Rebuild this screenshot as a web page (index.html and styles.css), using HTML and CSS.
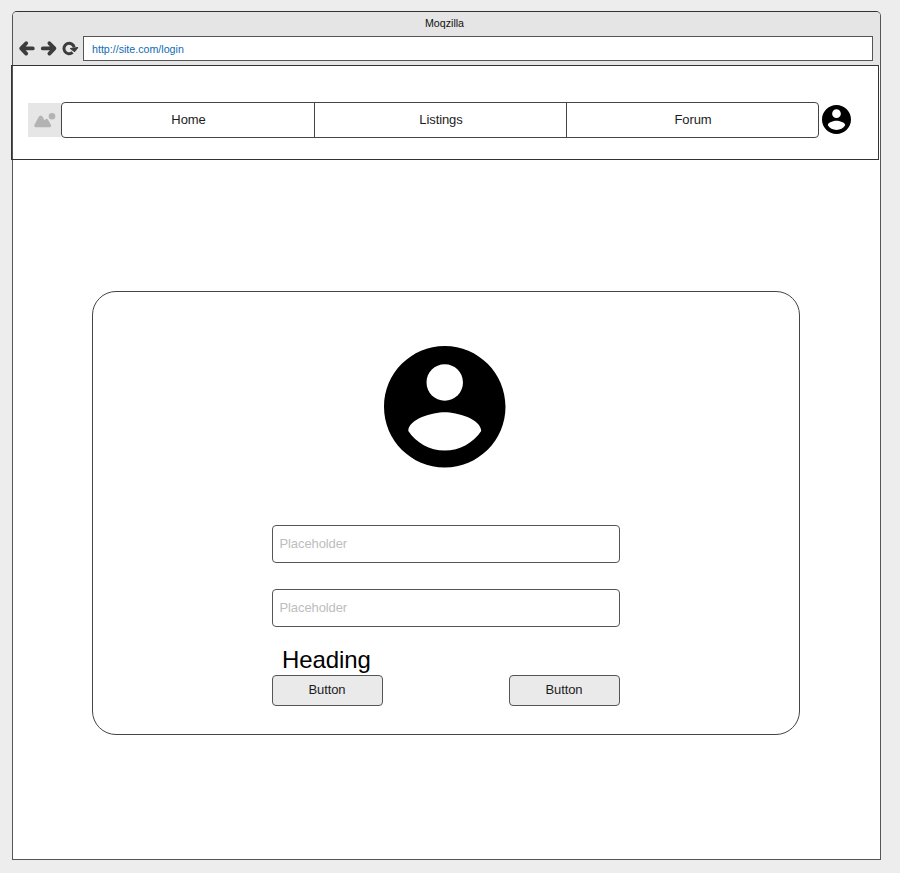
FILE: index.html
```html
<!DOCTYPE html>
<html lang="en">
<head>
<meta charset="utf-8">
<title>Moqzilla</title>
<link rel="stylesheet" href="styles.css">
</head>
<body>
<svg class="defs" aria-hidden="true">
  <symbol id="account" viewBox="2 2 20 20" overflow="visible"><path d="M12 2C6.48 2 2 6.48 2 12s4.48 10 10 10 10-4.48 10-10S17.52 2 12 2zm0 3c1.66 0 3 1.34 3 3s-1.34 3-3 3-3-1.34-3-3 1.34-3 3-3zm0 14.2c-2.5 0-4.71-1.28-6-3.22.03-1.99 4-3.08 6-3.08 1.99 0 5.97 1.09 6 3.08-1.29 1.94-3.5 3.22-6 3.22z"/></symbol>
</svg>
<div class="window">
  <header class="chrome">
    <div class="title">Moqzilla</div>
    <div class="toolbar">
      <svg class="controls" width="60" height="20" viewBox="0 0 60 20" fill="none" stroke="#3c3c3c" stroke-width="3.8" stroke-linecap="round" stroke-linejoin="round">
        <path d="M8.2 5.2 L3.2 10.4 L8.2 15.6 M3.6 10.4 H14.8"/>
        <path d="M31.4 5.2 L36.4 10.4 L31.4 15.6 M36 10.4 H24.8"/>
        <path d="M54.6 14.4 A5.2 5.2 0 1 1 56.2 9.4" stroke-width="3" stroke-linecap="butt"/>
        <path d="M52.6 10.6 L59.6 9.6 L56.6 13.4 Z" fill="#3c3c3c" stroke-width="1.2"/>
      </svg>
      <div class="address">http://site.com/login</div>
    </div>
  </header>
  <nav class="navbar">
    <div class="logo">
      <svg width="33" height="34" viewBox="0 0 33 34" fill="#b3b3b3"><circle cx="24" cy="13.2" r="3.3"/><path d="M8 24.2 Q5.4 23.8 6.6 21.5 L10.6 14 Q12.6 11 14.8 14 L16.4 17.2 L17.6 16.2 Q19.2 15.2 20.2 17 L22.9 21.8 Q23.7 24 21.7 24.2 Z"/></svg>
    </div>
    <div class="tabs">
      <a class="tab">Home</a>
      <a class="tab">Listings</a>
      <a class="tab">Forum</a>
    </div>
    <svg class="user"><use href="#account"/></svg>
  </nav>
  <main class="page">
    <form class="card">
      <svg class="avatar"><use href="#account"/></svg>
      <div class="field">Placeholder</div>
      <div class="field">Placeholder</div>
      <h1 class="heading">Heading</h1>
      <div class="actions">
        <button class="button" type="button">Button</button>
        <button class="button" type="button">Button</button>
      </div>
    </form>
  </main>
</div>
</body>
</html>
```

FILE: styles.css
```css
* { box-sizing: border-box; }
body {
  margin: 0;
  padding: 11px 0 0 12px;
  background: #ededed;
  color: #1c1c1c;
  font: 13px/16px "Liberation Sans", Arial, sans-serif;
  letter-spacing: -0.1px;
}
svg { overflow: visible; }
.defs { position: absolute; width: 0; height: 0; }
.window {
  width: 869px;
  height: 849px;
  border: 1px solid #555;
  border-top-color: #333;
  border-radius: 5px 5px 0 0;
  background: #fff;
}
.chrome {
  height: 53px;
  border-radius: 4px 4px 0 0;
  background: #e5e5e5;
}
.title {
  height: 24px;
  padding-right: 4px;
  color: #111;
  font-size: 10.67px;
  letter-spacing: 0;
  line-height: 22px;
  text-align: center;
}
.toolbar { display: flex; padding-left: 5px; }
.controls { margin: 2px 5px 0 0; }
.address {
  width: 790px;
  height: 25px;
  padding-left: 8px;
  border: 1px solid #555;
  background: #fff;
  color: #0f6cb6;
  font-size: 10.67px;
  letter-spacing: 0;
  line-height: 25px;
}
.navbar {
  display: flex;
  width: 868px;
  height: 95px;
  margin-left: -2px;
  padding: 36px 0 0 16px;
  border: 1px solid #333;
}
.logo { width: 33px; height: 34px; margin-top: 1px; background: #e6e6e6; }
.logo svg { display: block; }
.tabs {
  display: grid;
  grid-template-columns: 252px 252px 252px;
  width: 758px;
  height: 36px;
  border: 1px solid #444;
  border-radius: 4px;
}
.tab { padding-left: 1px; line-height: 34px; text-align: center; }
.tab + .tab { border-left: 1px solid #444; }
.user { width: 29px; height: 29px; margin: 3px 0 0 3px; fill: #000; }
.page { padding: 131px 0 0 79px; }
.card {
  display: flex;
  flex-direction: column;
  width: 708px;
  height: 444px;
  padding: 54px 179px 0;
  border: 1px solid #444;
  border-radius: 24px;
}
.avatar { width: 121.5px; height: 121.5px; margin: 0 0 57.5px 112px; fill: #000; }
.field {
  flex: none;
  width: 348px;
  height: 38px;
  margin-bottom: 26px;
  padding-left: 7px;
  border: 1px solid #555;
  border-radius: 4px;
  color: #bdbdbd;
  line-height: 36px;
  text-indent: -0.5px;
}
.heading {
  margin: -8px 0 0 10px;
  color: #000;
  font-size: 24px;
  font-weight: 400;
  line-height: 29px;
}
.actions { display: flex; gap: 126px; margin-top: 1px; }
.button {
  flex: none;
  width: 111px;
  height: 31px;
  padding: 0 1px 2px 0;
  border: 1px solid #555;
  border-radius: 4px;
  background: #eaeaea;
  color: #1c1c1c;
  font: inherit;
  letter-spacing: inherit;
}
```
